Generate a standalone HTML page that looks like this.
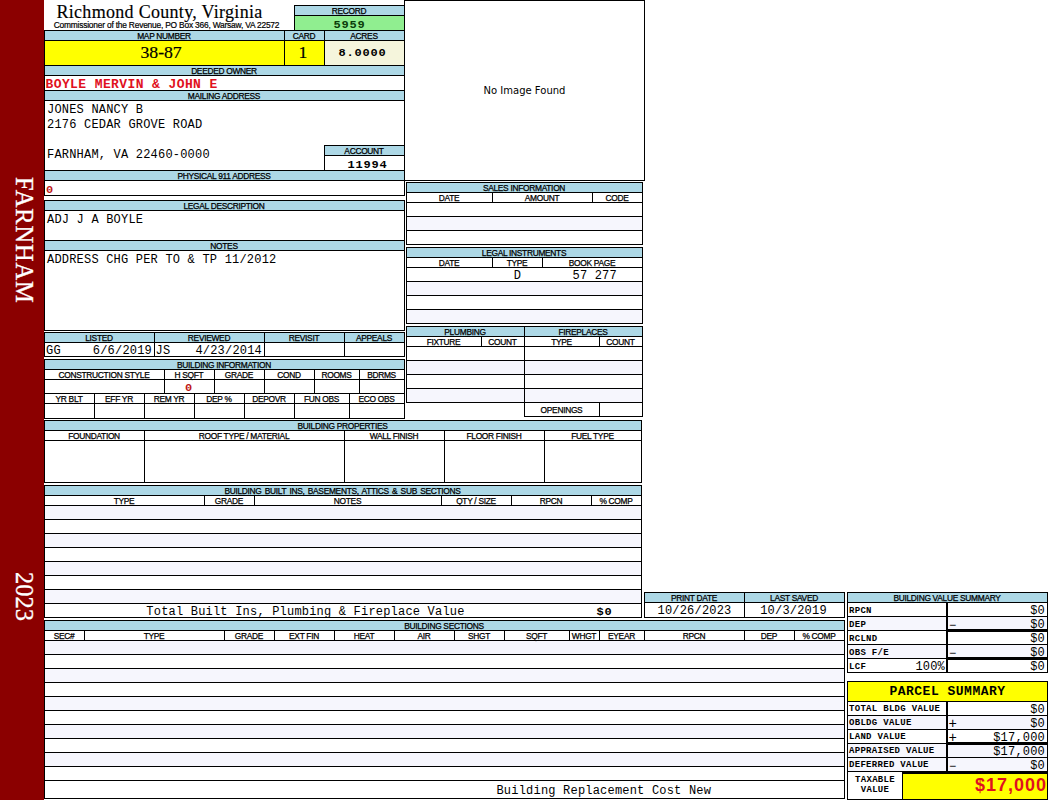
<!DOCTYPE html>
<html><head><meta charset="utf-8"><title>Richmond County, Virginia</title>
<style>
html,body{margin:0;padding:0;background:#fff;}
#p{position:relative;width:1050px;height:800px;overflow:hidden;background:#fff;font-family:"Liberation Sans",Arial,sans-serif;}
.r{position:absolute;}
.t{position:absolute;white-space:pre;color:#000;}
.lab{font:8.4px/10px "Liberation Sans",Arial,sans-serif;letter-spacing:-0.3px;height:10px;-webkit-text-stroke:0.25px #000;}
.mono{letter-spacing:0.2px;font:12px/14px "Liberation Mono","Courier New",monospace;height:14px;}
.monob{font:bold 12px/14px "Liberation Mono","Courier New",monospace;height:14px;letter-spacing:0.8px;transform:scaleY(.86);transform-origin:0 10.2px;}
.owner{font:bold 13px/14px "Liberation Mono","Courier New",monospace;color:#E01020;letter-spacing:0.4px;transform:scaleY(.92);transform-origin:0 10.4px;}
.redb{font:bold 12px/14px "Liberation Mono","Courier New",monospace;color:#C01818;transform:scaleY(.86);transform-origin:0 10.2px;}
.smb{font:bold 9px/10px "Liberation Mono","Courier New",monospace;letter-spacing:0.3px;}
.title{-webkit-text-stroke:0.15px #000;letter-spacing:0.3px;font:18px/20px "Liberation Serif","Times New Roman",serif;}
.sub{font:8.4px/10px "Liberation Sans",Arial,sans-serif;letter-spacing:-0.2px;-webkit-text-stroke:0.2px #000;}
.big{-webkit-text-stroke:0.2px #000;font:17.7px/20px "Liberation Serif","Times New Roman",serif;}
.noimg{font:10px/14px "DejaVu Sans","Liberation Sans",sans-serif;}
.psum{font:bold 13px/16px "Liberation Mono","Courier New",monospace;letter-spacing:0.5px;}
.tax{font:bold 18px/24px "Liberation Sans",Arial,sans-serif;color:#E01020;letter-spacing:1px;}
.side{position:absolute;color:#fff;-webkit-text-stroke:0.3px #fff;letter-spacing:0.85px;font:24.5px/24px "Liberation Serif","Times New Roman",serif;white-space:pre;writing-mode:vertical-rl;}
</style></head>
<body><div id="p">
<div class="r" style="left:0px;top:0px;width:44px;height:800px;background:#8B0000"></div>
<div class="side" style="left:12px;top:177px;">FARNHAM</div>
<div class="side" style="left:12px;top:572px;letter-spacing:0">2023</div>
<div class="t title" style="left:44px;top:1.92px;width:231px;text-align:center;">Richmond County, Virginia</div>
<div class="t sub" style="left:44px;top:20.09px;width:245px;text-align:center;">Commissioner of the Revenue, PO Box 366, Warsaw, VA 22572</div>
<div class="r" style="left:295px;top:6px;width:109px;height:9px;background:#ADD8E6"></div>
<div class="r" style="left:295px;top:16px;width:109px;height:14px;background:#90EE90"></div>
<div class="r" style="left:294px;top:5px;width:111px;height:1px;background:#000"></div>
<div class="r" style="left:294px;top:15px;width:111px;height:1px;background:#000"></div>
<div class="r" style="left:294px;top:5px;width:1px;height:26px;background:#000"></div>
<div class="t lab" style="left:294.5px;top:6.09px;width:109px;text-align:center;">RECORD</div>
<div class="t monob" style="left:295px;top:17.80px;width:109px;text-align:center;color:#0a3d0a">5959</div>
<div class="r" style="left:45px;top:31px;width:359px;height:9px;background:#ADD8E6"></div>
<div class="r" style="left:45px;top:41px;width:239px;height:24px;background:#FFFF00"></div>
<div class="r" style="left:285px;top:41px;width:39px;height:24px;background:#FFFF00"></div>
<div class="r" style="left:325px;top:41px;width:79px;height:24px;background:#F5F5DC"></div>
<div class="r" style="left:44px;top:30px;width:361px;height:1px;background:#000"></div>
<div class="r" style="left:44px;top:40px;width:361px;height:1px;background:#000"></div>
<div class="r" style="left:44px;top:65px;width:361px;height:1px;background:#000"></div>
<div class="r" style="left:284px;top:30px;width:1px;height:36px;background:#000"></div>
<div class="r" style="left:324px;top:30px;width:1px;height:36px;background:#000"></div>
<div class="t lab" style="left:44.5px;top:31.09px;width:239px;text-align:center;">MAP NUMBER</div>
<div class="t lab" style="left:284.5px;top:31.09px;width:39px;text-align:center;">CARD</div>
<div class="t lab" style="left:324.5px;top:31.09px;width:79px;text-align:center;">ACRES</div>
<div class="t big" style="left:41.6px;top:42.33px;width:239px;text-align:center;">38-87</div>
<div class="t big" style="left:283.5px;top:42.33px;width:39px;text-align:center;">1</div>
<div class="t monob" style="left:323px;top:45.80px;width:79px;text-align:center;">8.0000</div>
<div class="r" style="left:45px;top:66px;width:359px;height:9px;background:#ADD8E6"></div>
<div class="r" style="left:44px;top:75px;width:361px;height:1px;background:#000"></div>
<div class="t lab" style="left:44.5px;top:66.09px;width:359px;text-align:center;">DEEDED OWNER</div>
<div class="t owner" style="left:45.5px;top:77.54px;width:350px;text-align:left;">BOYLE MERVIN &amp; JOHN E</div>
<div class="r" style="left:44px;top:90px;width:361px;height:1px;background:#000"></div>
<div class="r" style="left:45px;top:91px;width:359px;height:9px;background:#ADD8E6"></div>
<div class="r" style="left:44px;top:100px;width:361px;height:1px;background:#000"></div>
<div class="t lab" style="left:44.5px;top:91.09px;width:359px;text-align:center;">MAILING ADDRESS</div>
<div class="t mono" style="left:47px;top:102.80px;width:350px;text-align:left;">JONES NANCY B</div>
<div class="t mono" style="left:47px;top:117.80px;width:350px;text-align:left;">2176 CEDAR GROVE ROAD</div>
<div class="t mono" style="left:47px;top:147.80px;width:350px;text-align:left;">FARNHAM, VA 22460-0000</div>
<div class="r" style="left:325px;top:146px;width:79px;height:9px;background:#ADD8E6"></div>
<div class="r" style="left:324px;top:145px;width:81px;height:1px;background:#000"></div>
<div class="r" style="left:324px;top:155px;width:81px;height:1px;background:#000"></div>
<div class="r" style="left:324px;top:145px;width:1px;height:26px;background:#000"></div>
<div class="t lab" style="left:324.5px;top:146.09px;width:79px;text-align:center;">ACCOUNT</div>
<div class="t monob" style="left:328px;top:157.80px;width:79px;text-align:center;">11994</div>
<div class="r" style="left:45px;top:171px;width:359px;height:9px;background:#ADD8E6"></div>
<div class="r" style="left:44px;top:170px;width:361px;height:1px;background:#000"></div>
<div class="r" style="left:44px;top:180px;width:361px;height:1px;background:#000"></div>
<div class="r" style="left:44px;top:195px;width:361px;height:1px;background:#000"></div>
<div class="t lab" style="left:44.5px;top:171.09px;width:359px;text-align:center;">PHYSICAL 911 ADDRESS</div>
<div class="t redb" style="left:46px;top:182.80px;width:50px;text-align:left;">0</div>
<div class="r" style="left:44px;top:30px;width:1px;height:166px;background:#000"></div>
<div class="r" style="left:45px;top:201px;width:359px;height:9px;background:#ADD8E6"></div>
<div class="r" style="left:44px;top:200px;width:361px;height:1px;background:#000"></div>
<div class="r" style="left:44px;top:210px;width:361px;height:1px;background:#000"></div>
<div class="t lab" style="left:44.5px;top:201.09px;width:359px;text-align:center;">LEGAL DESCRIPTION</div>
<div class="t mono" style="left:47px;top:212.80px;width:350px;text-align:left;">ADJ J A BOYLE</div>
<div class="r" style="left:45px;top:241px;width:359px;height:9px;background:#ADD8E6"></div>
<div class="r" style="left:44px;top:240px;width:361px;height:1px;background:#000"></div>
<div class="r" style="left:44px;top:250px;width:361px;height:1px;background:#000"></div>
<div class="t lab" style="left:44.5px;top:241.09px;width:359px;text-align:center;">NOTES</div>
<div class="t mono" style="left:47px;top:252.80px;width:350px;text-align:left;">ADDRESS CHG PER TO &amp; TP 11/2012</div>
<div class="r" style="left:44px;top:330px;width:361px;height:1px;background:#000"></div>
<div class="r" style="left:44px;top:200px;width:1px;height:131px;background:#000"></div>
<div class="r" style="left:404px;top:200px;width:1px;height:131px;background:#000"></div>
<div class="r" style="left:45px;top:333px;width:359px;height:9px;background:#ADD8E6"></div>
<div class="r" style="left:44px;top:332px;width:361px;height:1px;background:#000"></div>
<div class="r" style="left:44px;top:342px;width:361px;height:1px;background:#000"></div>
<div class="r" style="left:44px;top:356px;width:361px;height:1px;background:#000"></div>
<div class="r" style="left:44px;top:332px;width:1px;height:25px;background:#000"></div>
<div class="r" style="left:154px;top:332px;width:1px;height:25px;background:#000"></div>
<div class="r" style="left:264px;top:332px;width:1px;height:25px;background:#000"></div>
<div class="r" style="left:344px;top:332px;width:1px;height:25px;background:#000"></div>
<div class="r" style="left:404px;top:332px;width:1px;height:25px;background:#000"></div>
<div class="t lab" style="left:44.5px;top:333.09px;width:109px;text-align:center;">LISTED</div>
<div class="t lab" style="left:154.5px;top:333.09px;width:109px;text-align:center;">REVIEWED</div>
<div class="t lab" style="left:264.5px;top:333.09px;width:79px;text-align:center;">REVISIT</div>
<div class="t lab" style="left:344.5px;top:333.09px;width:59px;text-align:center;">APPEALS</div>
<div class="t mono" style="left:46px;top:343.80px;width:107px;text-align:left;">GG</div>
<div class="t mono" style="left:46px;top:343.80px;width:106px;text-align:right;">6/6/2019</div>
<div class="t mono" style="left:155.5px;top:343.80px;width:107px;text-align:left;">JS</div>
<div class="t mono" style="left:156px;top:343.80px;width:106px;text-align:right;">4/23/2014</div>
<div class="r" style="left:45px;top:360px;width:359px;height:9px;background:#ADD8E6"></div>
<div class="r" style="left:44px;top:359px;width:361px;height:1px;background:#000"></div>
<div class="r" style="left:44px;top:369px;width:361px;height:1px;background:#000"></div>
<div class="r" style="left:44px;top:379px;width:361px;height:1px;background:#000"></div>
<div class="r" style="left:44px;top:393px;width:361px;height:1px;background:#000"></div>
<div class="r" style="left:44px;top:403px;width:361px;height:1px;background:#000"></div>
<div class="r" style="left:44px;top:418px;width:361px;height:1px;background:#000"></div>
<div class="r" style="left:44px;top:359px;width:1px;height:60px;background:#000"></div>
<div class="r" style="left:404px;top:359px;width:1px;height:60px;background:#000"></div>
<div class="t lab" style="left:44.5px;top:360.09px;width:359px;text-align:center;">BUILDING INFORMATION</div>
<div class="r" style="left:164px;top:369px;width:1px;height:25px;background:#000"></div>
<div class="r" style="left:214px;top:369px;width:1px;height:25px;background:#000"></div>
<div class="r" style="left:264px;top:369px;width:1px;height:25px;background:#000"></div>
<div class="r" style="left:314px;top:369px;width:1px;height:25px;background:#000"></div>
<div class="r" style="left:359px;top:369px;width:1px;height:25px;background:#000"></div>
<div class="t lab" style="left:44.5px;top:370.09px;width:119px;text-align:center;">CONSTRUCTION STYLE</div>
<div class="t lab" style="left:164.5px;top:370.09px;width:49px;text-align:center;">H SQFT</div>
<div class="t lab" style="left:214.5px;top:370.09px;width:49px;text-align:center;">GRADE</div>
<div class="t lab" style="left:264.5px;top:370.09px;width:49px;text-align:center;">COND</div>
<div class="t lab" style="left:314.5px;top:370.09px;width:44px;text-align:center;">ROOMS</div>
<div class="t lab" style="left:359.5px;top:370.09px;width:44px;text-align:center;">BDRMS</div>
<div class="t redb" style="left:164px;top:380.80px;width:49px;text-align:center;">0</div>
<div class="r" style="left:94px;top:393px;width:1px;height:26px;background:#000"></div>
<div class="r" style="left:144px;top:393px;width:1px;height:26px;background:#000"></div>
<div class="r" style="left:194px;top:393px;width:1px;height:26px;background:#000"></div>
<div class="r" style="left:244px;top:393px;width:1px;height:26px;background:#000"></div>
<div class="r" style="left:294px;top:393px;width:1px;height:26px;background:#000"></div>
<div class="r" style="left:349px;top:393px;width:1px;height:26px;background:#000"></div>
<div class="t lab" style="left:44.5px;top:394.09px;width:49px;text-align:center;">YR BLT</div>
<div class="t lab" style="left:94.5px;top:394.09px;width:49px;text-align:center;">EFF YR</div>
<div class="t lab" style="left:144.5px;top:394.09px;width:49px;text-align:center;">REM YR</div>
<div class="t lab" style="left:194.5px;top:394.09px;width:49px;text-align:center;">DEP %</div>
<div class="t lab" style="left:244.5px;top:394.09px;width:49px;text-align:center;">DEPOVR</div>
<div class="t lab" style="left:294.5px;top:394.09px;width:54px;text-align:center;">FUN OBS</div>
<div class="t lab" style="left:349.5px;top:394.09px;width:54px;text-align:center;">ECO OBS</div>
<div class="r" style="left:45px;top:421px;width:596px;height:9px;background:#ADD8E6"></div>
<div class="r" style="left:44px;top:420px;width:598px;height:1px;background:#000"></div>
<div class="r" style="left:44px;top:430px;width:598px;height:1px;background:#000"></div>
<div class="r" style="left:44px;top:440px;width:598px;height:1px;background:#000"></div>
<div class="r" style="left:44px;top:482px;width:598px;height:1px;background:#000"></div>
<div class="r" style="left:44px;top:430px;width:1px;height:53px;background:#000"></div>
<div class="r" style="left:144px;top:430px;width:1px;height:53px;background:#000"></div>
<div class="r" style="left:344px;top:430px;width:1px;height:53px;background:#000"></div>
<div class="r" style="left:444px;top:430px;width:1px;height:53px;background:#000"></div>
<div class="r" style="left:544px;top:430px;width:1px;height:53px;background:#000"></div>
<div class="r" style="left:641px;top:430px;width:1px;height:53px;background:#000"></div>
<div class="r" style="left:44px;top:420px;width:1px;height:63px;background:#000"></div>
<div class="r" style="left:641px;top:420px;width:1px;height:63px;background:#000"></div>
<div class="t lab" style="left:44.5px;top:421.09px;width:596px;text-align:center;">BUILDING PROPERTIES</div>
<div class="t lab" style="left:44.5px;top:431.09px;width:99px;text-align:center;">FOUNDATION</div>
<div class="t lab" style="left:144.5px;top:431.09px;width:199px;text-align:center;">ROOF TYPE / MATERIAL</div>
<div class="t lab" style="left:344.5px;top:431.09px;width:99px;text-align:center;">WALL FINISH</div>
<div class="t lab" style="left:444.5px;top:431.09px;width:99px;text-align:center;">FLOOR FINISH</div>
<div class="t lab" style="left:544.5px;top:431.09px;width:96px;text-align:center;">FUEL TYPE</div>
<div class="r" style="left:45px;top:486px;width:596px;height:9px;background:#ADD8E6"></div>
<div class="r" style="left:45px;top:506px;width:596px;height:13px;background:#F6F6FD"></div>
<div class="r" style="left:45px;top:534px;width:596px;height:13px;background:#F6F6FD"></div>
<div class="r" style="left:45px;top:562px;width:596px;height:13px;background:#F6F6FD"></div>
<div class="r" style="left:45px;top:590px;width:596px;height:13px;background:#F6F6FD"></div>
<div class="r" style="left:44px;top:485px;width:598px;height:1px;background:#000"></div>
<div class="r" style="left:44px;top:495px;width:598px;height:1px;background:#000"></div>
<div class="r" style="left:44px;top:505px;width:598px;height:1px;background:#000"></div>
<div class="r" style="left:44px;top:519px;width:598px;height:1px;background:#000"></div>
<div class="r" style="left:44px;top:533px;width:598px;height:1px;background:#000"></div>
<div class="r" style="left:44px;top:547px;width:598px;height:1px;background:#000"></div>
<div class="r" style="left:44px;top:561px;width:598px;height:1px;background:#000"></div>
<div class="r" style="left:44px;top:575px;width:598px;height:1px;background:#000"></div>
<div class="r" style="left:44px;top:589px;width:598px;height:1px;background:#000"></div>
<div class="r" style="left:44px;top:603px;width:598px;height:1px;background:#000"></div>
<div class="r" style="left:44px;top:617px;width:598px;height:1px;background:#000"></div>
<div class="r" style="left:44px;top:485px;width:1px;height:133px;background:#000"></div>
<div class="r" style="left:641px;top:485px;width:1px;height:133px;background:#000"></div>
<div class="t lab" style="left:44.5px;top:486.09px;width:596px;text-align:center;word-spacing:1.2px">BUILDING BUILT INS, BASEMENTS, ATTICS &amp; SUB SECTIONS</div>
<div class="r" style="left:204px;top:495px;width:1px;height:11px;background:#000"></div>
<div class="r" style="left:254px;top:495px;width:1px;height:11px;background:#000"></div>
<div class="r" style="left:441px;top:495px;width:1px;height:11px;background:#000"></div>
<div class="r" style="left:511px;top:495px;width:1px;height:11px;background:#000"></div>
<div class="r" style="left:591px;top:495px;width:1px;height:11px;background:#000"></div>
<div class="t lab" style="left:44.5px;top:496.09px;width:159px;text-align:center;">TYPE</div>
<div class="t lab" style="left:204.5px;top:496.09px;width:49px;text-align:center;">GRADE</div>
<div class="t lab" style="left:254.5px;top:496.09px;width:186px;text-align:center;">NOTES</div>
<div class="t lab" style="left:441.5px;top:496.09px;width:69px;text-align:center;">QTY / SIZE</div>
<div class="t lab" style="left:511.5px;top:496.09px;width:79px;text-align:center;">RPCN</div>
<div class="t lab" style="left:591.5px;top:496.09px;width:49px;text-align:center;">% COMP</div>
<div class="t mono" style="left:45.5px;top:604.80px;width:520px;text-align:center;">Total Built Ins, Plumbing &amp; Fireplace Value</div>
<div class="t monob" style="left:560px;top:604.80px;width:52.5px;text-align:right;">$0</div>
<div class="r" style="left:45px;top:621px;width:799px;height:9px;background:#ADD8E6"></div>
<div class="r" style="left:45px;top:641px;width:799px;height:13px;background:#F6F6FD"></div>
<div class="r" style="left:45px;top:669px;width:799px;height:13px;background:#F6F6FD"></div>
<div class="r" style="left:45px;top:697px;width:799px;height:13px;background:#F6F6FD"></div>
<div class="r" style="left:45px;top:725px;width:799px;height:13px;background:#F6F6FD"></div>
<div class="r" style="left:45px;top:753px;width:799px;height:13px;background:#F6F6FD"></div>
<div class="r" style="left:44px;top:620px;width:801px;height:1px;background:#000"></div>
<div class="r" style="left:44px;top:630px;width:801px;height:1px;background:#000"></div>
<div class="r" style="left:44px;top:640px;width:801px;height:1px;background:#000"></div>
<div class="r" style="left:44px;top:654px;width:801px;height:1px;background:#000"></div>
<div class="r" style="left:44px;top:668px;width:801px;height:1px;background:#000"></div>
<div class="r" style="left:44px;top:682px;width:801px;height:1px;background:#000"></div>
<div class="r" style="left:44px;top:696px;width:801px;height:1px;background:#000"></div>
<div class="r" style="left:44px;top:710px;width:801px;height:1px;background:#000"></div>
<div class="r" style="left:44px;top:724px;width:801px;height:1px;background:#000"></div>
<div class="r" style="left:44px;top:738px;width:801px;height:1px;background:#000"></div>
<div class="r" style="left:44px;top:752px;width:801px;height:1px;background:#000"></div>
<div class="r" style="left:44px;top:766px;width:801px;height:1px;background:#000"></div>
<div class="r" style="left:44px;top:780px;width:801px;height:1px;background:#000"></div>
<div class="r" style="left:44px;top:798px;width:801px;height:1px;background:#000"></div>
<div class="r" style="left:44px;top:620px;width:1px;height:179px;background:#000"></div>
<div class="r" style="left:844px;top:620px;width:1px;height:179px;background:#000"></div>
<div class="t lab" style="left:44.5px;top:621.09px;width:799px;text-align:center;">BUILDING SECTIONS</div>
<div class="r" style="left:84px;top:630px;width:1px;height:11px;background:#000"></div>
<div class="r" style="left:224px;top:630px;width:1px;height:11px;background:#000"></div>
<div class="r" style="left:274px;top:630px;width:1px;height:11px;background:#000"></div>
<div class="r" style="left:334px;top:630px;width:1px;height:11px;background:#000"></div>
<div class="r" style="left:394px;top:630px;width:1px;height:11px;background:#000"></div>
<div class="r" style="left:454px;top:630px;width:1px;height:11px;background:#000"></div>
<div class="r" style="left:504px;top:630px;width:1px;height:11px;background:#000"></div>
<div class="r" style="left:569px;top:630px;width:1px;height:11px;background:#000"></div>
<div class="r" style="left:599px;top:630px;width:1px;height:11px;background:#000"></div>
<div class="r" style="left:644px;top:630px;width:1px;height:11px;background:#000"></div>
<div class="r" style="left:744px;top:630px;width:1px;height:11px;background:#000"></div>
<div class="r" style="left:794px;top:630px;width:1px;height:11px;background:#000"></div>
<div class="t lab" style="left:44.5px;top:631.09px;width:39px;text-align:center;">SEC#</div>
<div class="t lab" style="left:84.5px;top:631.09px;width:139px;text-align:center;">TYPE</div>
<div class="t lab" style="left:224.5px;top:631.09px;width:49px;text-align:center;">GRADE</div>
<div class="t lab" style="left:274.5px;top:631.09px;width:59px;text-align:center;">EXT FIN</div>
<div class="t lab" style="left:334.5px;top:631.09px;width:59px;text-align:center;">HEAT</div>
<div class="t lab" style="left:394.5px;top:631.09px;width:59px;text-align:center;">AIR</div>
<div class="t lab" style="left:454.5px;top:631.09px;width:49px;text-align:center;">SHGT</div>
<div class="t lab" style="left:504.5px;top:631.09px;width:64px;text-align:center;">SQFT</div>
<div class="t lab" style="left:569.5px;top:631.09px;width:29px;text-align:center;">WHGT</div>
<div class="t lab" style="left:599.5px;top:631.09px;width:44px;text-align:center;">EYEAR</div>
<div class="t lab" style="left:644.5px;top:631.09px;width:99px;text-align:center;">RPCN</div>
<div class="t lab" style="left:744.5px;top:631.09px;width:49px;text-align:center;">DEP</div>
<div class="t lab" style="left:794.5px;top:631.09px;width:49px;text-align:center;">% COMP</div>
<div class="t mono" style="left:398.8px;top:784.30px;width:410px;text-align:center;">Building Replacement Cost New</div>
<div class="r" style="left:404px;top:0px;width:241px;height:1px;background:#000"></div>
<div class="r" style="left:404px;top:180px;width:241px;height:1px;background:#000"></div>
<div class="r" style="left:404px;top:0px;width:1px;height:181px;background:#000"></div>
<div class="r" style="left:644px;top:0px;width:1px;height:181px;background:#000"></div>
<div class="t noimg" style="left:405px;top:83.54px;width:239px;text-align:center;">No Image Found</div>
<div class="r" style="left:404px;top:0px;width:1px;height:196px;background:#000"></div>
<div class="r" style="left:407px;top:183px;width:235px;height:9px;background:#ADD8E6"></div>
<div class="r" style="left:407px;top:217px;width:235px;height:13px;background:#F6F6FD"></div>
<div class="r" style="left:406px;top:182px;width:237px;height:1px;background:#000"></div>
<div class="r" style="left:406px;top:192px;width:237px;height:1px;background:#000"></div>
<div class="r" style="left:406px;top:202px;width:237px;height:1px;background:#000"></div>
<div class="r" style="left:406px;top:216px;width:237px;height:1px;background:#000"></div>
<div class="r" style="left:406px;top:230px;width:237px;height:1px;background:#000"></div>
<div class="r" style="left:406px;top:244px;width:237px;height:1px;background:#000"></div>
<div class="r" style="left:406px;top:182px;width:1px;height:63px;background:#000"></div>
<div class="r" style="left:642px;top:182px;width:1px;height:63px;background:#000"></div>
<div class="r" style="left:492px;top:192px;width:1px;height:11px;background:#000"></div>
<div class="r" style="left:592px;top:192px;width:1px;height:11px;background:#000"></div>
<div class="t lab" style="left:406.5px;top:183.09px;width:235px;text-align:center;">SALES INFORMATION</div>
<div class="t lab" style="left:406.5px;top:193.09px;width:85px;text-align:center;">DATE</div>
<div class="t lab" style="left:492.5px;top:193.09px;width:99px;text-align:center;">AMOUNT</div>
<div class="t lab" style="left:592.5px;top:193.09px;width:49px;text-align:center;">CODE</div>
<div class="r" style="left:407px;top:248px;width:235px;height:9px;background:#ADD8E6"></div>
<div class="r" style="left:407px;top:282px;width:235px;height:13px;background:#F6F6FD"></div>
<div class="r" style="left:407px;top:310px;width:235px;height:13px;background:#F6F6FD"></div>
<div class="r" style="left:406px;top:247px;width:237px;height:1px;background:#000"></div>
<div class="r" style="left:406px;top:257px;width:237px;height:1px;background:#000"></div>
<div class="r" style="left:406px;top:267px;width:237px;height:1px;background:#000"></div>
<div class="r" style="left:406px;top:281px;width:237px;height:1px;background:#000"></div>
<div class="r" style="left:406px;top:295px;width:237px;height:1px;background:#000"></div>
<div class="r" style="left:406px;top:309px;width:237px;height:1px;background:#000"></div>
<div class="r" style="left:406px;top:323px;width:237px;height:1px;background:#000"></div>
<div class="r" style="left:406px;top:247px;width:1px;height:77px;background:#000"></div>
<div class="r" style="left:642px;top:247px;width:1px;height:77px;background:#000"></div>
<div class="r" style="left:492px;top:257px;width:1px;height:11px;background:#000"></div>
<div class="r" style="left:542px;top:257px;width:1px;height:11px;background:#000"></div>
<div class="t lab" style="left:406.5px;top:248.09px;width:235px;text-align:center;">LEGAL INSTRUMENTS</div>
<div class="t lab" style="left:406.5px;top:258.09px;width:85px;text-align:center;">DATE</div>
<div class="t lab" style="left:492.5px;top:258.09px;width:49px;text-align:center;">TYPE</div>
<div class="t lab" style="left:542.5px;top:258.09px;width:99px;text-align:center;">BOOK PAGE</div>
<div class="t mono" style="left:493px;top:269.30px;width:49px;text-align:center;">D</div>
<div class="t mono" style="left:541.5px;top:269.30px;width:99px;text-align:center;"> 57 277</div>
<div class="r" style="left:407px;top:327px;width:235px;height:9px;background:#ADD8E6"></div>
<div class="r" style="left:407px;top:361px;width:235px;height:13px;background:#F6F6FD"></div>
<div class="r" style="left:407px;top:389px;width:235px;height:13px;background:#F6F6FD"></div>
<div class="r" style="left:406px;top:326px;width:237px;height:1px;background:#000"></div>
<div class="r" style="left:406px;top:336px;width:237px;height:1px;background:#000"></div>
<div class="r" style="left:406px;top:346px;width:237px;height:1px;background:#000"></div>
<div class="r" style="left:406px;top:360px;width:237px;height:1px;background:#000"></div>
<div class="r" style="left:406px;top:374px;width:237px;height:1px;background:#000"></div>
<div class="r" style="left:406px;top:388px;width:237px;height:1px;background:#000"></div>
<div class="r" style="left:406px;top:402px;width:237px;height:1px;background:#000"></div>
<div class="r" style="left:406px;top:326px;width:1px;height:77px;background:#000"></div>
<div class="r" style="left:642px;top:326px;width:1px;height:91px;background:#000"></div>
<div class="r" style="left:524px;top:326px;width:1px;height:91px;background:#000"></div>
<div class="r" style="left:524px;top:416px;width:119px;height:1px;background:#000"></div>
<div class="r" style="left:599px;top:402px;width:1px;height:15px;background:#000"></div>
<div class="r" style="left:481px;top:336px;width:1px;height:11px;background:#000"></div>
<div class="r" style="left:599px;top:336px;width:1px;height:11px;background:#000"></div>
<div class="t lab" style="left:406.5px;top:327.09px;width:117px;text-align:center;">PLUMBING</div>
<div class="t lab" style="left:524.5px;top:327.09px;width:117px;text-align:center;">FIREPLACES</div>
<div class="t lab" style="left:406.5px;top:337.09px;width:74px;text-align:center;">FIXTURE</div>
<div class="t lab" style="left:481.5px;top:337.09px;width:42px;text-align:center;">COUNT</div>
<div class="t lab" style="left:524.5px;top:337.09px;width:74px;text-align:center;">TYPE</div>
<div class="t lab" style="left:599.5px;top:337.09px;width:42px;text-align:center;">COUNT</div>
<div class="t lab" style="left:524.5px;top:405.09px;width:74px;text-align:center;">OPENINGS</div>
<div class="r" style="left:645px;top:593px;width:199px;height:9px;background:#ADD8E6"></div>
<div class="r" style="left:644px;top:592px;width:201px;height:1px;background:#000"></div>
<div class="r" style="left:644px;top:602px;width:201px;height:1px;background:#000"></div>
<div class="r" style="left:644px;top:617px;width:201px;height:1px;background:#000"></div>
<div class="r" style="left:644px;top:592px;width:1px;height:26px;background:#000"></div>
<div class="r" style="left:744px;top:592px;width:1px;height:26px;background:#000"></div>
<div class="r" style="left:844px;top:592px;width:1px;height:26px;background:#000"></div>
<div class="t lab" style="left:644.5px;top:593.09px;width:99px;text-align:center;">PRINT DATE</div>
<div class="t lab" style="left:744.5px;top:593.09px;width:99px;text-align:center;">LAST SAVED</div>
<div class="t mono" style="left:645px;top:603.80px;width:99px;text-align:center;">10/26/2023</div>
<div class="t mono" style="left:744px;top:603.80px;width:99px;text-align:center;">10/3/2019</div>
<div class="r" style="left:848px;top:593px;width:199px;height:9px;background:#ADD8E6"></div>
<div class="r" style="left:848px;top:617px;width:199px;height:13px;background:#F6F6FD"></div>
<div class="r" style="left:848px;top:645px;width:199px;height:13px;background:#F6F6FD"></div>
<div class="r" style="left:847px;top:592px;width:201px;height:1px;background:#000"></div>
<div class="r" style="left:847px;top:602px;width:201px;height:1px;background:#000"></div>
<div class="r" style="left:847px;top:616px;width:201px;height:1px;background:#000"></div>
<div class="r" style="left:847px;top:630px;width:201px;height:1px;background:#000"></div>
<div class="r" style="left:847px;top:644px;width:201px;height:1px;background:#000"></div>
<div class="r" style="left:847px;top:658px;width:201px;height:1px;background:#000"></div>
<div class="r" style="left:847px;top:672px;width:201px;height:1px;background:#000"></div>
<div class="r" style="left:847px;top:592px;width:1px;height:81px;background:#000"></div>
<div class="r" style="left:1047px;top:592px;width:1px;height:81px;background:#000"></div>
<div class="r" style="left:946px;top:602px;width:2px;height:71px;background:#000"></div>
<div class="r" style="left:946px;top:629px;width:102px;height:3px;background:#000"></div>
<div class="r" style="left:946px;top:657px;width:102px;height:3px;background:#000"></div>
<div class="t lab" style="left:847.5px;top:593.09px;width:199px;text-align:center;">BUILDING VALUE SUMMARY</div>
<div class="t smb" style="left:849px;top:605.60px;width:96px;text-align:left;">RPCN</div>
<div class="t mono" style="left:960px;top:603.80px;width:85px;text-align:right;">$0</div>
<div class="t smb" style="left:849px;top:619.60px;width:96px;text-align:left;">DEP</div>
<div class="t mono" style="left:949px;top:619.30px;width:20px;text-align:left;">&minus;</div>
<div class="t mono" style="left:960px;top:617.80px;width:85px;text-align:right;">$0</div>
<div class="t smb" style="left:849px;top:633.60px;width:96px;text-align:left;">RCLND</div>
<div class="t mono" style="left:960px;top:631.80px;width:85px;text-align:right;">$0</div>
<div class="t smb" style="left:849px;top:647.60px;width:96px;text-align:left;">OBS F/E</div>
<div class="t mono" style="left:949px;top:647.30px;width:20px;text-align:left;">&minus;</div>
<div class="t mono" style="left:960px;top:645.80px;width:85px;text-align:right;">$0</div>
<div class="t smb" style="left:849px;top:661.60px;width:96px;text-align:left;">LCF</div>
<div class="t mono" style="left:960px;top:659.80px;width:85px;text-align:right;">$0</div>
<div class="t mono" style="left:900px;top:659.80px;width:45px;text-align:right;">100%</div>
<div class="r" style="left:848px;top:682px;width:199px;height:19px;background:#FFFF00"></div>
<div class="r" style="left:848px;top:716px;width:199px;height:13px;background:#F6F6FD"></div>
<div class="r" style="left:848px;top:744px;width:199px;height:13px;background:#F6F6FD"></div>
<div class="r" style="left:848px;top:758px;width:199px;height:13px;background:#F6F6FD"></div>
<div class="r" style="left:903px;top:774px;width:144px;height:25px;background:#FFFF00"></div>
<div class="r" style="left:847px;top:681px;width:201px;height:1px;background:#000"></div>
<div class="r" style="left:847px;top:701px;width:201px;height:1px;background:#000"></div>
<div class="r" style="left:847px;top:715px;width:201px;height:1px;background:#000"></div>
<div class="r" style="left:847px;top:729px;width:201px;height:1px;background:#000"></div>
<div class="r" style="left:847px;top:743px;width:201px;height:1px;background:#000"></div>
<div class="r" style="left:847px;top:757px;width:201px;height:1px;background:#000"></div>
<div class="r" style="left:847px;top:771px;width:201px;height:1px;background:#000"></div>
<div class="r" style="left:847px;top:799px;width:201px;height:1px;background:#000"></div>
<div class="r" style="left:847px;top:681px;width:1px;height:119px;background:#000"></div>
<div class="r" style="left:1047px;top:681px;width:1px;height:119px;background:#000"></div>
<div class="r" style="left:946px;top:701px;width:2px;height:71px;background:#000"></div>
<div class="r" style="left:902px;top:771px;width:1px;height:29px;background:#000"></div>
<div class="r" style="left:946px;top:742px;width:102px;height:3px;background:#000"></div>
<div class="r" style="left:902px;top:771px;width:146px;height:3px;background:#000"></div>
<div class="t psum" style="left:848px;top:683.54px;width:199px;text-align:center;">PARCEL SUMMARY</div>
<div class="t smb" style="left:849px;top:703.60px;width:96px;text-align:left;">TOTAL BLDG VALUE</div>
<div class="t mono" style="left:960px;top:702.80px;width:85px;text-align:right;">$0</div>
<div class="t smb" style="left:849px;top:717.60px;width:96px;text-align:left;">OBLDG VALUE</div>
<div class="t mono" style="left:948.5px;top:717.30px;width:20px;text-align:left;font-size:14px">+</div>
<div class="t mono" style="left:960px;top:716.80px;width:85px;text-align:right;">$0</div>
<div class="t smb" style="left:849px;top:731.60px;width:96px;text-align:left;">LAND VALUE</div>
<div class="t mono" style="left:948.5px;top:731.30px;width:20px;text-align:left;font-size:14px">+</div>
<div class="t mono" style="left:960px;top:730.80px;width:85px;text-align:right;">$17,000</div>
<div class="t smb" style="left:849px;top:745.60px;width:96px;text-align:left;">APPRAISED VALUE</div>
<div class="t mono" style="left:960px;top:744.80px;width:85px;text-align:right;">$17,000</div>
<div class="t smb" style="left:849px;top:759.60px;width:96px;text-align:left;">DEFERRED VALUE</div>
<div class="t mono" style="left:949px;top:760.30px;width:20px;text-align:left;">&minus;</div>
<div class="t mono" style="left:960px;top:758.80px;width:85px;text-align:right;">$0</div>
<div class="t smb" style="left:848px;top:775.20px;width:54px;text-align:center;">TAXABLE</div>
<div class="t smb" style="left:848px;top:785.20px;width:54px;text-align:center;">VALUE</div>
<div class="t tax" style="left:903px;top:772.76px;width:144px;text-align:right;">$17,000</div>
</div></body></html>
